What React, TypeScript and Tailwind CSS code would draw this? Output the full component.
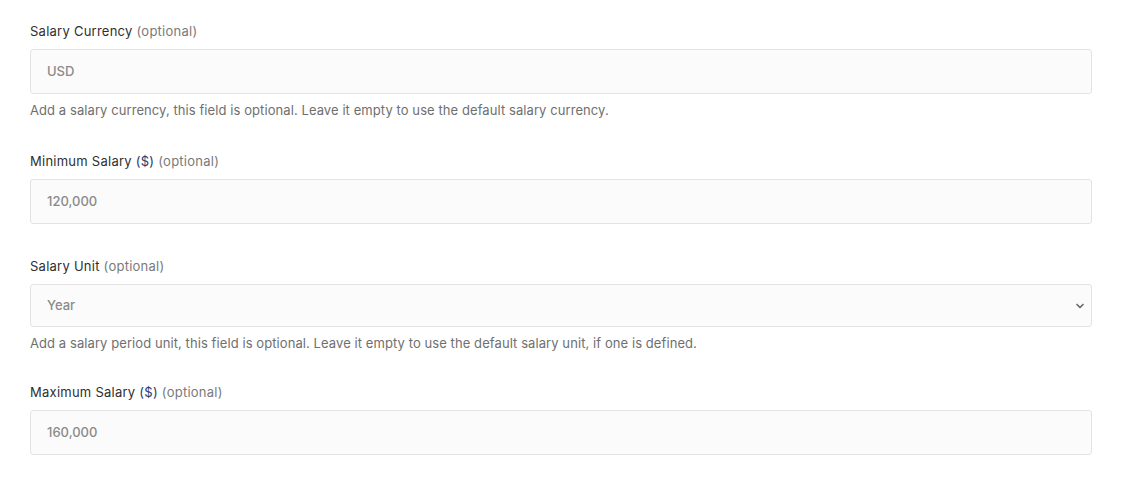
import React from "react";

const labelFont = { fontFamily: "Inter, 'Open Sans', sans-serif" };

function Label({ name, mid }: { name: string; mid?: string }) {
  return (
    <div className="h-[20px] leading-[20px] text-[13px] text-[#2f2f2f] tracking-[0.25px] font-['Inter','Open_Sans',sans-serif]">
      {name}
      {mid && <span className="text-[#2b3a6b]"> {mid}</span>}
      <span className="text-[#7a7a7a]"> (optional)</span>
    </div>
  );
}

function Field({ value }: { value: string }) {
  return (
    <div className="mt-[8px] h-[45px] w-[1062px] rounded-[3px] border border-[#e3e3e3] bg-[#fbfbfb] flex items-center pl-[16px] text-[13px] font-medium text-[#8a8a8a] font-['Inter',sans-serif]">
      {value}
    </div>
  );
}

function Help({ text }: { text: string }) {
  return (
    <div className="mt-[6px] h-[20px] leading-[20px] text-[13px] text-[#6f6f6f] tracking-[0.08px] font-['Inter',sans-serif]">
      {text}
    </div>
  );
}

export default function App() {
  return (
    <div className="min-h-[477px] w-[1123px] bg-white pl-[30px] pt-[21px]" style={labelFont}>
      <Label name="Salary Currency" />
      <Field value="USD" />
      <Help text="Add a salary currency, this field is optional. Leave it empty to use the default salary currency." />

      <div className="mt-[31px]">
        <Label name="Minimum Salary" mid="($)" />
        <Field value="120,000" />
      </div>

      <div className="mt-[32px]">
        <Label name="Salary Unit" />
        <div className="mt-[8px] h-[43px] w-[1062px] rounded-[3px] border border-[#e3e3e3] bg-[#fbfbfb] flex items-center justify-between pl-[16px] pr-[6px] text-[13px] font-medium text-[#8a8a8a] font-['Inter',sans-serif]">
          <span>Year</span>
          <svg width="10" height="10" viewBox="0 0 10 10" fill="none">
            <path d="M2 3.5 L5 6.5 L8 3.5" stroke="#6b6b6b" strokeWidth="1.7" strokeLinecap="round" strokeLinejoin="round" />
          </svg>
        </div>
        <Help text="Add a salary period unit, this field is optional. Leave it empty to use the default salary unit, if one is defined." />
      </div>

      <div className="mt-[29px]">
        <Label name="Maximum Salary" mid="($)" />
        <Field value="160,000" />
      </div>
    </div>
  );
}
